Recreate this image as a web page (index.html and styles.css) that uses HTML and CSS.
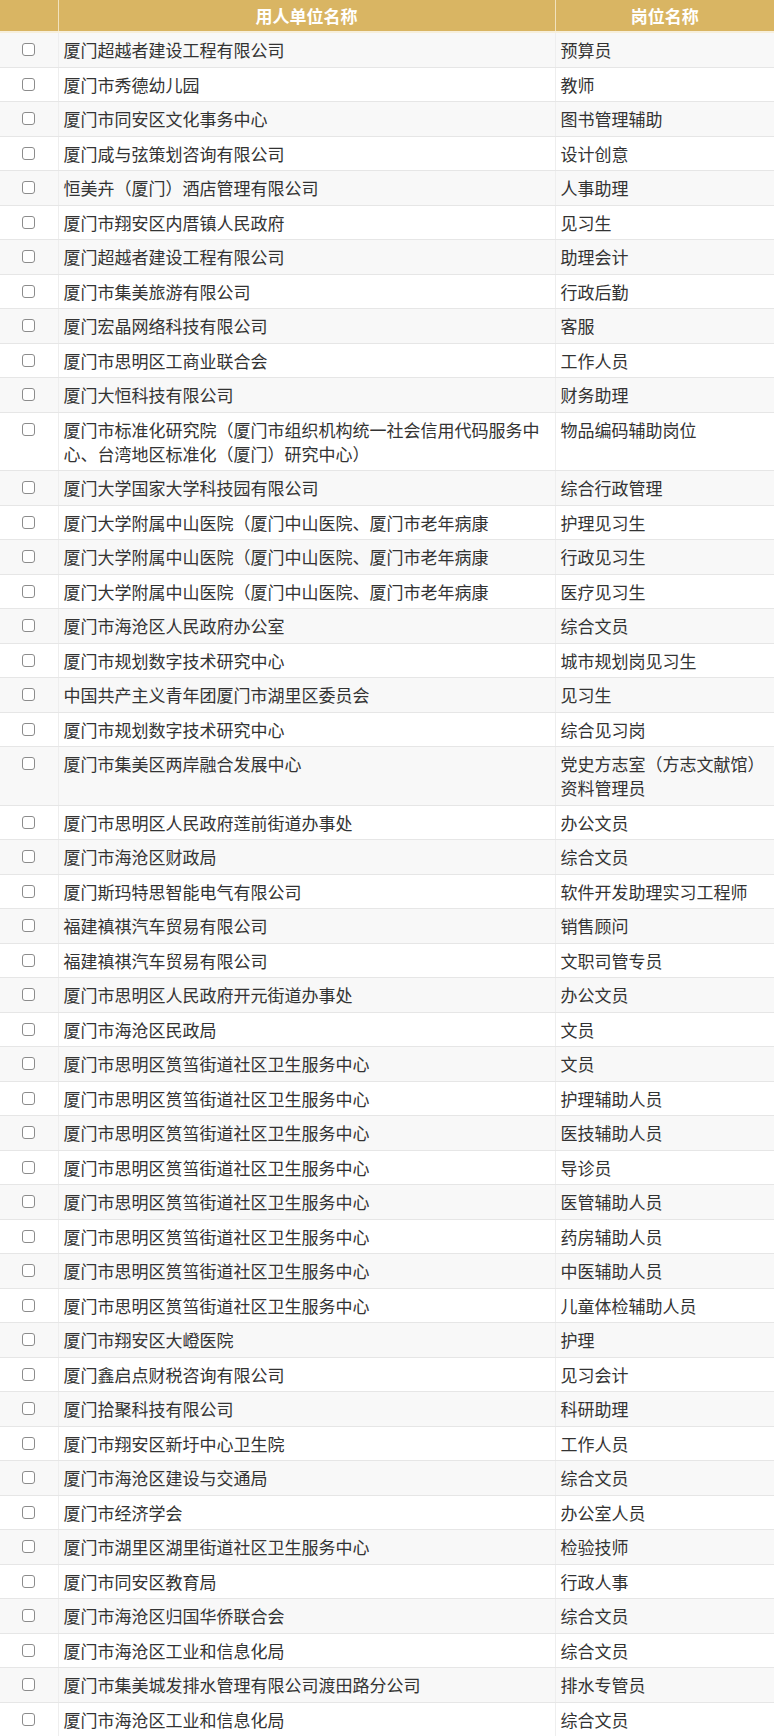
FILE: index.html
```html
<!DOCTYPE html>
<html lang="zh-CN">
<head>
<meta charset="utf-8">
<title>岗位列表</title>
<link rel="stylesheet" href="styles.css">
</head>
<body>
<table class="jobs">
  <colgroup><col class="c-check"><col class="c-org"><col class="c-pos"></colgroup>
  <thead>
    <tr><th></th><th>用人单位名称</th><th>岗位名称</th></tr>
  </thead>
  <tbody>
    <tr><td class="chk"><span class="box"></span></td><td>厦门超越者建设工程有限公司</td><td>预算员</td></tr>
    <tr><td class="chk"><span class="box"></span></td><td>厦门市秀德幼儿园</td><td>教师</td></tr>
    <tr><td class="chk"><span class="box"></span></td><td>厦门市同安区文化事务中心</td><td>图书管理辅助</td></tr>
    <tr><td class="chk"><span class="box"></span></td><td>厦门咸与弦策划咨询有限公司</td><td>设计创意</td></tr>
    <tr><td class="chk"><span class="box"></span></td><td>恒美卉（厦门）酒店管理有限公司</td><td>人事助理</td></tr>
    <tr><td class="chk"><span class="box"></span></td><td>厦门市翔安区内厝镇人民政府</td><td>见习生</td></tr>
    <tr><td class="chk"><span class="box"></span></td><td>厦门超越者建设工程有限公司</td><td>助理会计</td></tr>
    <tr><td class="chk"><span class="box"></span></td><td>厦门市集美旅游有限公司</td><td>行政后勤</td></tr>
    <tr><td class="chk"><span class="box"></span></td><td>厦门宏晶网络科技有限公司</td><td>客服</td></tr>
    <tr><td class="chk"><span class="box"></span></td><td>厦门市思明区工商业联合会</td><td>工作人员</td></tr>
    <tr><td class="chk"><span class="box"></span></td><td>厦门大恒科技有限公司</td><td>财务助理</td></tr>
    <tr><td class="chk"><span class="box"></span></td><td>厦门市标准化研究院（厦门市组织机构统一社会信用代码服务中心、台湾地区标准化（厦门）研究中心）</td><td>物品编码辅助岗位</td></tr>
    <tr><td class="chk"><span class="box"></span></td><td>厦门大学国家大学科技园有限公司</td><td>综合行政管理</td></tr>
    <tr><td class="chk"><span class="box"></span></td><td>厦门大学附属中山医院（厦门中山医院、厦门市老年病康</td><td>护理见习生</td></tr>
    <tr><td class="chk"><span class="box"></span></td><td>厦门大学附属中山医院（厦门中山医院、厦门市老年病康</td><td>行政见习生</td></tr>
    <tr><td class="chk"><span class="box"></span></td><td>厦门大学附属中山医院（厦门中山医院、厦门市老年病康</td><td>医疗见习生</td></tr>
    <tr><td class="chk"><span class="box"></span></td><td>厦门市海沧区人民政府办公室</td><td>综合文员</td></tr>
    <tr><td class="chk"><span class="box"></span></td><td>厦门市规划数字技术研究中心</td><td>城市规划岗见习生</td></tr>
    <tr><td class="chk"><span class="box"></span></td><td>中国共产主义青年团厦门市湖里区委员会</td><td>见习生</td></tr>
    <tr><td class="chk"><span class="box"></span></td><td>厦门市规划数字技术研究中心</td><td>综合见习岗</td></tr>
    <tr><td class="chk"><span class="box"></span></td><td>厦门市集美区两岸融合发展中心</td><td>党史方志室（方志文献馆）资料管理员</td></tr>
    <tr><td class="chk"><span class="box"></span></td><td>厦门市思明区人民政府莲前街道办事处</td><td>办公文员</td></tr>
    <tr><td class="chk"><span class="box"></span></td><td>厦门市海沧区财政局</td><td>综合文员</td></tr>
    <tr><td class="chk"><span class="box"></span></td><td>厦门斯玛特思智能电气有限公司</td><td>软件开发助理实习工程师</td></tr>
    <tr><td class="chk"><span class="box"></span></td><td>福建禛祺汽车贸易有限公司</td><td>销售顾问</td></tr>
    <tr><td class="chk"><span class="box"></span></td><td>福建禛祺汽车贸易有限公司</td><td>文职司管专员</td></tr>
    <tr><td class="chk"><span class="box"></span></td><td>厦门市思明区人民政府开元街道办事处</td><td>办公文员</td></tr>
    <tr><td class="chk"><span class="box"></span></td><td>厦门市海沧区民政局</td><td>文员</td></tr>
    <tr><td class="chk"><span class="box"></span></td><td>厦门市思明区筼筜街道社区卫生服务中心</td><td>文员</td></tr>
    <tr><td class="chk"><span class="box"></span></td><td>厦门市思明区筼筜街道社区卫生服务中心</td><td>护理辅助人员</td></tr>
    <tr><td class="chk"><span class="box"></span></td><td>厦门市思明区筼筜街道社区卫生服务中心</td><td>医技辅助人员</td></tr>
    <tr><td class="chk"><span class="box"></span></td><td>厦门市思明区筼筜街道社区卫生服务中心</td><td>导诊员</td></tr>
    <tr><td class="chk"><span class="box"></span></td><td>厦门市思明区筼筜街道社区卫生服务中心</td><td>医管辅助人员</td></tr>
    <tr><td class="chk"><span class="box"></span></td><td>厦门市思明区筼筜街道社区卫生服务中心</td><td>药房辅助人员</td></tr>
    <tr><td class="chk"><span class="box"></span></td><td>厦门市思明区筼筜街道社区卫生服务中心</td><td>中医辅助人员</td></tr>
    <tr><td class="chk"><span class="box"></span></td><td>厦门市思明区筼筜街道社区卫生服务中心</td><td>儿童体检辅助人员</td></tr>
    <tr><td class="chk"><span class="box"></span></td><td>厦门市翔安区大嶝医院</td><td>护理</td></tr>
    <tr><td class="chk"><span class="box"></span></td><td>厦门鑫启点财税咨询有限公司</td><td>见习会计</td></tr>
    <tr><td class="chk"><span class="box"></span></td><td>厦门拾聚科技有限公司</td><td>科研助理</td></tr>
    <tr><td class="chk"><span class="box"></span></td><td>厦门市翔安区新圩中心卫生院</td><td>工作人员</td></tr>
    <tr><td class="chk"><span class="box"></span></td><td>厦门市海沧区建设与交通局</td><td>综合文员</td></tr>
    <tr><td class="chk"><span class="box"></span></td><td>厦门市经济学会</td><td>办公室人员</td></tr>
    <tr><td class="chk"><span class="box"></span></td><td>厦门市湖里区湖里街道社区卫生服务中心</td><td>检验技师</td></tr>
    <tr><td class="chk"><span class="box"></span></td><td>厦门市同安区教育局</td><td>行政人事</td></tr>
    <tr><td class="chk"><span class="box"></span></td><td>厦门市海沧区归国华侨联合会</td><td>综合文员</td></tr>
    <tr><td class="chk"><span class="box"></span></td><td>厦门市海沧区工业和信息化局</td><td>综合文员</td></tr>
    <tr><td class="chk"><span class="box"></span></td><td>厦门市集美城发排水管理有限公司渡田路分公司</td><td>排水专管员</td></tr>
    <tr><td class="chk"><span class="box"></span></td><td>厦门市海沧区工业和信息化局</td><td>综合文员</td></tr>
  </tbody>
</table>
</body>
</html>
```
FILE: styles.css
```css
html, body {
  margin: 0;
  padding: 0;
  background: #ffffff;
}

.jobs {
  width: 774px;
  border-collapse: collapse;
  table-layout: fixed;
  font-family: "Noto Sans CJK SC", "Noto Sans", sans-serif;
  font-size: 17px;
  color: #333333;
}

.c-check { width: 58px; }
.c-org { width: 497px; }
.c-pos { width: 219px; }

.jobs th {
  background: #d9b563;
  color: #ffffff;
  font-weight: bold;
  text-align: center;
  height: 31px;
  padding: 0 5px;
  line-height: 31px;
  border-left: 1px solid #f1e2bd;
  border-bottom: 2px solid #f7efdc;
}

.jobs th:first-child { border-left: none; }

.jobs td {
  padding: 5px 5px 4.5px 5px;
  line-height: 24px;
  vertical-align: top;
  border-bottom: 1px solid #e6e6e6;
  border-left: 1px solid #eeeeee;
}

.jobs td:first-child { border-left: none; }

.jobs tbody tr:nth-child(odd) td { background: #f8f8f8; }
.jobs tbody tr:nth-child(even) td { background: #ffffff; }

.chk { text-align: left; }

.box {
  display: block;
  width: 11px;
  height: 11px;
  margin: 5px 0 0 17px;
  border: 1px solid #8c8c8c;
  border-radius: 3px;
  background: #ffffff;
}
```
